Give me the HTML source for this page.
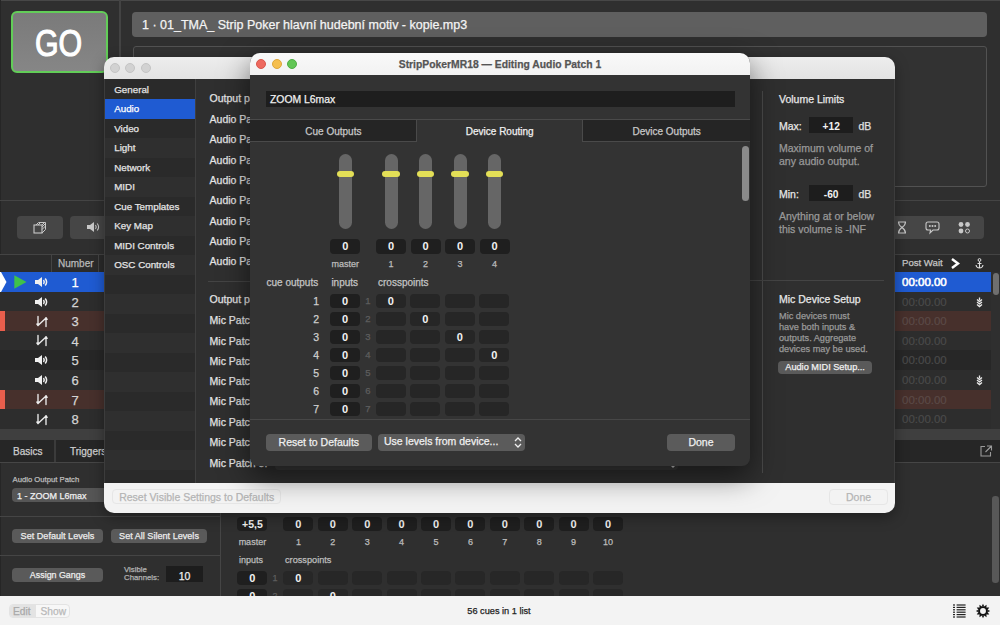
<!DOCTYPE html>
<html><head><meta charset="utf-8">
<style>
*{margin:0;padding:0;box-sizing:border-box}
html,body{width:1000px;height:625px;overflow:hidden;background:#2f2f2f;font-family:"Liberation Sans",sans-serif;color:#e6e6e6}
.a{position:absolute}
.t{position:absolute;white-space:nowrap;-webkit-text-stroke:0.25px currentColor}
.c{text-align:center}
</style></head>
<body>
<div class="a" style="left:0px;top:0px;width:1000px;height:596px;background:#2f2f2f;"></div>
<div class="a" style="left:0px;top:0px;width:1000px;height:1px;background:#474747;"></div>
<div class="a" style="left:0px;top:0px;width:1px;height:596px;background:#262626;"></div>
<div class="a" style="left:11px;top:11px;width:97px;height:62px;background:linear-gradient(#7a7a7a,#868686);border:2.5px solid #62cd58;border-radius:6px"></div>
<div class="t c" style="left:10.0px;top:21.6px;width:97px;font-size:37px;line-height:44px;color:#ffffff;transform:scaleX(0.82);-webkit-text-stroke:1.1px #fff">GO</div>
<div class="a" style="left:119px;top:0px;width:1.5px;height:200px;background:#434343;"></div>
<div class="a" style="left:132px;top:12px;width:855px;height:24.5px;background:#5f5f5f;border-radius:4px"></div>
<div class="t" style="left:142px;top:17px;font-size:12.5px;line-height:17px;color:#f4f4f4;">1 · 01_TMA_ Strip Poker hlavní hudební motiv - kopie.mp3</div>
<div class="a" style="left:133px;top:46px;width:854px;height:141px;background:#323232;border:1px solid #525252;border-radius:3px"></div>
<div class="a" style="left:0px;top:200px;width:1000px;height:1px;background:#444;"></div>
<div class="a" style="left:16.5px;top:216px;width:46px;height:23px;background:#464646;border-radius:4px"></div>
<div class="a" style="left:70px;top:216px;width:60px;height:23px;background:#464646;border-radius:4px"></div>
<div class="a" style="left:860px;top:216px;width:124px;height:23px;background:#464646;border-radius:4px"></div>
<svg class="a" style="left:33px;top:221px;" width="14" height="13" viewBox="0 0 14 13"><rect x="1" y="4" width="8" height="8" fill="none" stroke="#c8c8c8" stroke-width="1.1"/><path d="M3 4 L5.5 1.5 H12.5 V8.5 L9 12 M5 4 L7.5 1.5 M9 4 L11.5 1.5 M9 6 L12.5 2.5 M9 8.5 L12.5 5" fill="none" stroke="#c8c8c8" stroke-width="1"/></svg>
<svg class="a" style="left:86px;top:221px;" width="14" height="12" viewBox="0 0 14 12"><path d="M1 4 H4 L8 1 V11 L4 8 H1 Z" fill="#c8c8c8"/><path d="M9.5 4 Q11 6 9.5 8" fill="none" stroke="#c8c8c8" stroke-width="1.1"/><path d="M11.2 2.5 Q14 6 11.2 9.5" fill="none" stroke="#c8c8c8" stroke-width="1.1"/></svg>
<svg class="a" style="left:897px;top:221px;" width="10" height="13" viewBox="0 0 10 13"><path d="M1 1 H9 M1 12 H9 M1.5 1 Q1.5 4 5 6.5 Q8.5 9 8.5 12 M8.5 1 Q8.5 4 5 6.5 Q1.5 9 1.5 12" fill="none" stroke="#c8c8c8" stroke-width="1.1"/></svg>
<svg class="a" style="left:925px;top:221px;" width="15" height="14" viewBox="0 0 15 14"><path d="M3 1 H12 Q14 1 14 3 V7 Q14 9 12 9 H8 L5 12 L5.5 9 H3 Q1 9 1 7 V3 Q1 1 3 1 Z" fill="none" stroke="#c8c8c8" stroke-width="1.1"/><circle cx="4.8" cy="5" r="1" fill="#c8c8c8"/><circle cx="7.5" cy="5" r="1" fill="#c8c8c8"/><circle cx="10.2" cy="5" r="1" fill="#c8c8c8"/></svg>
<svg class="a" style="left:958px;top:221px;" width="13" height="13" viewBox="0 0 13 13"><circle cx="3" cy="3.5" r="2.4" fill="#c8c8c8"/><circle cx="9.5" cy="3.5" r="2.4" fill="#c8c8c8"/><circle cx="3" cy="10" r="2.4" fill="#c8c8c8"/><circle cx="9.5" cy="10" r="2" fill="none" stroke="#c8c8c8" stroke-width="1"/></svg>
<div class="a" style="left:0px;top:254px;width:1000px;height:1px;background:#444;"></div>
<div class="a" style="left:0px;top:255px;width:1000px;height:17px;background:#2b2b2b;"></div>
<div class="a" style="left:51px;top:255px;width:1px;height:17px;background:#444;"></div>
<div class="a" style="left:98px;top:255px;width:1px;height:17px;background:#444;"></div>
<div class="t" style="left:58px;top:257px;font-size:10px;line-height:13px;color:#b9b9b9;">Number</div>
<div class="t" style="left:902px;top:256.3px;font-size:9.6px;line-height:13px;color:#c6c6c6;">Post Wait</div>
<svg class="a" style="left:950px;top:258px;" width="10" height="11" viewBox="0 0 10 11"><path d="M2 1 L8 5.5 L2 10" fill="none" stroke="#ffffff" stroke-width="2.4" stroke-linejoin="miter"/></svg>
<svg class="a" style="left:975px;top:258px;" width="9" height="11" viewBox="0 0 9 11"><circle cx="4.5" cy="2" r="1.4" fill="none" stroke="#e0e0e0" stroke-width="1"/><path d="M4.5 3.4 V10 M1 7 Q1.5 10 4.5 10 Q7.5 10 8 7 M2.5 5.5 H6.5" fill="none" stroke="#e0e0e0" stroke-width="1.1"/></svg>
<div class="a" style="left:0px;top:272.0px;width:990.5px;height:19.6px;background:#1f5bd2;"></div>
<svg class="a" style="left:34px;top:276.0px;" width="14" height="12" viewBox="0 0 14 12"><path d="M1 4 H4 L8 1 V11 L4 8 H1 Z" fill="#f0f0f0"/><path d="M9.5 4 Q11 6 9.5 8" fill="none" stroke="#f0f0f0" stroke-width="1.5"/><path d="M11.2 2.5 Q14 6 11.2 9.5" fill="none" stroke="#f0f0f0" stroke-width="1.5"/></svg>
<div class="t c" style="left:65.0px;top:275.0px;width:20px;font-size:13px;line-height:16px;color:#ffffff;">1</div>
<div class="t" style="left:902px;top:275.0px;font-size:11.5px;line-height:15px;color:#ffffff;font-weight:normal;-webkit-text-stroke:0.6px #ffffff">00:00.00</div>
<div class="a" style="left:0px;top:291.6px;width:990.5px;height:19.6px;background:#2d2d2d;"></div>
<svg class="a" style="left:34px;top:295.6px;" width="14" height="12" viewBox="0 0 14 12"><path d="M1 4 H4 L8 1 V11 L4 8 H1 Z" fill="#f0f0f0"/><path d="M9.5 4 Q11 6 9.5 8" fill="none" stroke="#f0f0f0" stroke-width="1.5"/><path d="M11.2 2.5 Q14 6 11.2 9.5" fill="none" stroke="#f0f0f0" stroke-width="1.5"/></svg>
<div class="t c" style="left:65.0px;top:294.6px;width:20px;font-size:13px;line-height:16px;color:#d4d4d4;">2</div>
<div class="t" style="left:902px;top:294.6px;font-size:11.5px;line-height:15px;color:#4a4a4a;font-weight:normal;-webkit-text-stroke:0.2px #4a4a4a">00:00.00</div>
<svg class="a" style="left:975.7px;top:296.6px;" width="7" height="11" viewBox="0 0 7 11"><path d="M3.5 0.5 V3 M1 2.6 L3.5 4.6 L6 2.6 M1 5 L3.5 7 L6 5 M1 7.4 L3.5 9.6 L6 7.4" fill="none" stroke="#ececec" stroke-width="1.3"/></svg>
<div class="a" style="left:0px;top:311.2px;width:990.5px;height:19.6px;background:#47302c;"></div>
<div class="a" style="left:0px;top:311.2px;width:5px;height:19.6px;background:#ea5e4c;"></div>
<svg class="a" style="left:36px;top:314.7px;" width="12" height="13" viewBox="0 0 12 13"><path d="M2 1.5 V10.5 L10 3 V11.5 M0.9 9 L2 10.6 L3.1 9 M8.9 4.4 L10 2.6 L11.1 4.4" fill="none" stroke="#ececec" stroke-width="1.35" stroke-linecap="round" stroke-linejoin="round"/></svg>
<div class="t c" style="left:65.0px;top:314.2px;width:20px;font-size:13px;line-height:16px;color:#d4d4d4;">3</div>
<div class="t" style="left:902px;top:314.2px;font-size:11.5px;line-height:15px;color:#5b4a47;font-weight:normal;-webkit-text-stroke:0.2px #5b4a47">00:00.00</div>
<div class="a" style="left:0px;top:330.8px;width:990.5px;height:19.6px;background:#2d2d2d;"></div>
<svg class="a" style="left:36px;top:334.3px;" width="12" height="13" viewBox="0 0 12 13"><path d="M2 1.5 V10.5 L10 3 V11.5 M0.9 9 L2 10.6 L3.1 9 M8.9 4.4 L10 2.6 L11.1 4.4" fill="none" stroke="#ececec" stroke-width="1.35" stroke-linecap="round" stroke-linejoin="round"/></svg>
<div class="t c" style="left:65.0px;top:333.8px;width:20px;font-size:13px;line-height:16px;color:#d4d4d4;">4</div>
<div class="t" style="left:902px;top:333.8px;font-size:11.5px;line-height:15px;color:#4a4a4a;font-weight:normal;-webkit-text-stroke:0.2px #4a4a4a">00:00.00</div>
<div class="a" style="left:0px;top:350.4px;width:990.5px;height:19.6px;background:#272727;"></div>
<svg class="a" style="left:34px;top:354.4px;" width="14" height="12" viewBox="0 0 14 12"><path d="M1 4 H4 L8 1 V11 L4 8 H1 Z" fill="#f0f0f0"/><path d="M9.5 4 Q11 6 9.5 8" fill="none" stroke="#f0f0f0" stroke-width="1.5"/><path d="M11.2 2.5 Q14 6 11.2 9.5" fill="none" stroke="#f0f0f0" stroke-width="1.5"/></svg>
<div class="t c" style="left:65.0px;top:353.4px;width:20px;font-size:13px;line-height:16px;color:#d4d4d4;">5</div>
<div class="t" style="left:902px;top:353.4px;font-size:11.5px;line-height:15px;color:#4a4a4a;font-weight:normal;-webkit-text-stroke:0.2px #4a4a4a">00:00.00</div>
<div class="a" style="left:0px;top:370.0px;width:990.5px;height:19.6px;background:#2d2d2d;"></div>
<svg class="a" style="left:34px;top:374.0px;" width="14" height="12" viewBox="0 0 14 12"><path d="M1 4 H4 L8 1 V11 L4 8 H1 Z" fill="#f0f0f0"/><path d="M9.5 4 Q11 6 9.5 8" fill="none" stroke="#f0f0f0" stroke-width="1.5"/><path d="M11.2 2.5 Q14 6 11.2 9.5" fill="none" stroke="#f0f0f0" stroke-width="1.5"/></svg>
<div class="t c" style="left:65.0px;top:373.0px;width:20px;font-size:13px;line-height:16px;color:#d4d4d4;">6</div>
<div class="t" style="left:902px;top:373.0px;font-size:11.5px;line-height:15px;color:#4a4a4a;font-weight:normal;-webkit-text-stroke:0.2px #4a4a4a">00:00.00</div>
<svg class="a" style="left:975.7px;top:375.0px;" width="7" height="11" viewBox="0 0 7 11"><path d="M3.5 0.5 V3 M1 2.6 L3.5 4.6 L6 2.6 M1 5 L3.5 7 L6 5 M1 7.4 L3.5 9.6 L6 7.4" fill="none" stroke="#ececec" stroke-width="1.3"/></svg>
<div class="a" style="left:0px;top:389.6px;width:990.5px;height:19.6px;background:#47302c;"></div>
<div class="a" style="left:0px;top:389.6px;width:5px;height:19.6px;background:#ea5e4c;"></div>
<svg class="a" style="left:36px;top:393.1px;" width="12" height="13" viewBox="0 0 12 13"><path d="M2 1.5 V10.5 L10 3 V11.5 M0.9 9 L2 10.6 L3.1 9 M8.9 4.4 L10 2.6 L11.1 4.4" fill="none" stroke="#ececec" stroke-width="1.35" stroke-linecap="round" stroke-linejoin="round"/></svg>
<div class="t c" style="left:65.0px;top:392.6px;width:20px;font-size:13px;line-height:16px;color:#d4d4d4;">7</div>
<div class="t" style="left:902px;top:392.6px;font-size:11.5px;line-height:15px;color:#5b4a47;font-weight:normal;-webkit-text-stroke:0.2px #5b4a47">00:00.00</div>
<div class="a" style="left:0px;top:409.2px;width:990.5px;height:19.6px;background:#2d2d2d;"></div>
<svg class="a" style="left:36px;top:412.7px;" width="12" height="13" viewBox="0 0 12 13"><path d="M2 1.5 V10.5 L10 3 V11.5 M0.9 9 L2 10.6 L3.1 9 M8.9 4.4 L10 2.6 L11.1 4.4" fill="none" stroke="#ececec" stroke-width="1.35" stroke-linecap="round" stroke-linejoin="round"/></svg>
<div class="t c" style="left:65.0px;top:412.2px;width:20px;font-size:13px;line-height:16px;color:#d4d4d4;">8</div>
<div class="t" style="left:902px;top:412.2px;font-size:11.5px;line-height:15px;color:#4a4a4a;font-weight:normal;-webkit-text-stroke:0.2px #4a4a4a">00:00.00</div>
<svg class="a" style="left:0px;top:272px;" width="7" height="20" viewBox="0 0 7 20"><path d="M0 0 H1 L6.5 10 L1 20 H0 Z" fill="#ffffff"/></svg>
<svg class="a" style="left:14px;top:275.2px;" width="13" height="14" viewBox="0 0 13 14"><path d="M0.3 0.3 L12.5 7 L0.3 13.7 Z" fill="#3fc24a"/></svg>
<div class="a" style="left:992.5px;top:273px;width:6px;height:21.5px;background:#6f6f6f;border-radius:3px"></div>
<div class="a" style="left:0px;top:428.8px;width:1000px;height:11.2px;background:#3f3f3f;"></div>
<div class="a" style="left:0px;top:440px;width:1000px;height:22px;background:#262626;"></div>
<div class="a" style="left:54px;top:440px;width:1.5px;height:22px;background:#3b3b3b;"></div>
<div class="t" style="left:13px;top:444.5px;font-size:10px;line-height:13px;color:#cdcdcd;">Basics</div>
<div class="t" style="left:70px;top:444.5px;font-size:10px;line-height:13px;color:#cdcdcd;">Triggers</div>
<div class="a" style="left:0px;top:462px;width:1000px;height:1.2px;background:#464646;"></div>
<div class="a" style="left:992.2px;top:495.5px;width:6.5px;height:87px;background:#585858;border-radius:3.2px"></div>
<svg class="a" style="left:980px;top:445px;" width="13" height="12" viewBox="0 0 13 12"><path d="M5 1.5 H1 V11 H10.5 V7 M7 1 H11.5 V5.5 M11.5 1 L5.5 7" fill="none" stroke="#9a9a9a" stroke-width="1.1"/></svg>
<div class="t" style="left:12.5px;top:475px;font-size:7.7px;line-height:10px;color:#bdbdbd;">Audio Output Patch</div>
<div class="a" style="left:12px;top:488px;width:120px;height:14px;background:#565656;border-radius:4px"></div>
<div class="t" style="left:17px;top:489.5px;font-size:9px;line-height:12px;color:#f0f0f0;-webkit-text-stroke:0.25px #f0f0f0">1 - ZOOM L6max</div>
<div class="a" style="left:0px;top:516px;width:220px;height:1px;background:#454545;"></div>
<div class="t c" style="left:12px;top:529px;width:91px;height:14px;line-height:14px;background:#5a5a5a;border-radius:4px;font-size:9.1px;color:#ededed;">Set Default Levels</div>
<div class="t c" style="left:111px;top:529px;width:96px;height:14px;line-height:14px;background:#5a5a5a;border-radius:4px;font-size:9.1px;color:#ededed;">Set All Silent Levels</div>
<div class="a" style="left:0px;top:555px;width:220px;height:1px;background:#454545;"></div>
<div class="t c" style="left:12px;top:568px;width:91px;height:14px;line-height:14px;background:#5a5a5a;border-radius:4px;font-size:8.9px;color:#ededed;">Assign Gangs</div>
<div class="t" style="left:124px;top:565.7px;font-size:7.8px;line-height:8.5px;color:#b3b3b3;">Visible<br>Channels:</div>
<div class="t c" style="left:166px;top:566px;width:37px;height:16px;line-height:16px;background:#1d1d1d;border-radius:4px;font-size:10.5px;color:#f0f0f0;border-radius:0;padding-top:1.8px">10</div>
<div class="a" style="left:220px;top:512px;width:1px;height:84px;background:#454545;"></div>
<div class="t c" style="left:237.4px;top:516.5px;width:30px;height:14px;line-height:14px;background:#1f1f1f;border-radius:4px;font-size:10.5px;color:#f2f2f2;font-weight:bold;-webkit-text-stroke:0">+5,5</div>
<div class="t c" style="left:283.4px;top:516.5px;width:30px;height:14px;line-height:14px;background:#1f1f1f;border-radius:4px;font-size:11px;color:#f2f2f2;font-weight:bold;-webkit-text-stroke:0">0</div>
<div class="t c" style="left:286.4px;top:535.5px;width:24px;font-size:9px;line-height:12px;color:#bdbdbd;">1</div>
<div class="t c" style="left:317.8px;top:516.5px;width:30px;height:14px;line-height:14px;background:#1f1f1f;border-radius:4px;font-size:11px;color:#f2f2f2;font-weight:bold;-webkit-text-stroke:0">0</div>
<div class="t c" style="left:320.8px;top:535.5px;width:24px;font-size:9px;line-height:12px;color:#bdbdbd;">2</div>
<div class="t c" style="left:352.2px;top:516.5px;width:30px;height:14px;line-height:14px;background:#1f1f1f;border-radius:4px;font-size:11px;color:#f2f2f2;font-weight:bold;-webkit-text-stroke:0">0</div>
<div class="t c" style="left:355.2px;top:535.5px;width:24px;font-size:9px;line-height:12px;color:#bdbdbd;">3</div>
<div class="t c" style="left:386.6px;top:516.5px;width:30px;height:14px;line-height:14px;background:#1f1f1f;border-radius:4px;font-size:11px;color:#f2f2f2;font-weight:bold;-webkit-text-stroke:0">0</div>
<div class="t c" style="left:389.6px;top:535.5px;width:24px;font-size:9px;line-height:12px;color:#bdbdbd;">4</div>
<div class="t c" style="left:421.0px;top:516.5px;width:30px;height:14px;line-height:14px;background:#1f1f1f;border-radius:4px;font-size:11px;color:#f2f2f2;font-weight:bold;-webkit-text-stroke:0">0</div>
<div class="t c" style="left:424.0px;top:535.5px;width:24px;font-size:9px;line-height:12px;color:#bdbdbd;">5</div>
<div class="t c" style="left:455.4px;top:516.5px;width:30px;height:14px;line-height:14px;background:#1f1f1f;border-radius:4px;font-size:11px;color:#f2f2f2;font-weight:bold;-webkit-text-stroke:0">0</div>
<div class="t c" style="left:458.4px;top:535.5px;width:24px;font-size:9px;line-height:12px;color:#bdbdbd;">6</div>
<div class="t c" style="left:489.8px;top:516.5px;width:30px;height:14px;line-height:14px;background:#1f1f1f;border-radius:4px;font-size:11px;color:#f2f2f2;font-weight:bold;-webkit-text-stroke:0">0</div>
<div class="t c" style="left:492.8px;top:535.5px;width:24px;font-size:9px;line-height:12px;color:#bdbdbd;">7</div>
<div class="t c" style="left:524.2px;top:516.5px;width:30px;height:14px;line-height:14px;background:#1f1f1f;border-radius:4px;font-size:11px;color:#f2f2f2;font-weight:bold;-webkit-text-stroke:0">0</div>
<div class="t c" style="left:527.2px;top:535.5px;width:24px;font-size:9px;line-height:12px;color:#bdbdbd;">8</div>
<div class="t c" style="left:558.6px;top:516.5px;width:30px;height:14px;line-height:14px;background:#1f1f1f;border-radius:4px;font-size:11px;color:#f2f2f2;font-weight:bold;-webkit-text-stroke:0">0</div>
<div class="t c" style="left:561.6px;top:535.5px;width:24px;font-size:9px;line-height:12px;color:#bdbdbd;">9</div>
<div class="t c" style="left:593.0px;top:516.5px;width:30px;height:14px;line-height:14px;background:#1f1f1f;border-radius:4px;font-size:11px;color:#f2f2f2;font-weight:bold;-webkit-text-stroke:0">0</div>
<div class="t c" style="left:596.0px;top:535.5px;width:24px;font-size:9px;line-height:12px;color:#bdbdbd;">10</div>
<div class="t c" style="left:232.4px;top:535.5px;width:40px;font-size:9px;line-height:12px;color:#bdbdbd;">master</div>
<div class="t" style="left:239px;top:554px;font-size:9px;line-height:12px;color:#bdbdbd;">inputs</div>
<div class="t" style="left:285px;top:554px;font-size:9.2px;line-height:12px;color:#bdbdbd;">crosspoints</div>
<div class="t c" style="left:237.4px;top:571px;width:30px;height:14px;line-height:14px;background:#1f1f1f;border-radius:4px;font-size:11px;color:#f2f2f2;font-weight:bold;-webkit-text-stroke:0">0</div>
<div class="t c" style="left:270.0px;top:572px;width:10px;font-size:9px;line-height:12px;color:#5e5e5e;">1</div>
<div class="t c" style="left:283.4px;top:571px;width:30px;height:14px;line-height:14px;background:#272727;border-radius:4px;font-size:11px;color:#f2f2f2;font-weight:bold;-webkit-text-stroke:0">0</div>
<div class="t c" style="left:317.8px;top:571px;width:30px;height:14px;line-height:14px;background:#272727;border-radius:4px;font-size:11px;color:#f2f2f2;font-weight:bold;-webkit-text-stroke:0"></div>
<div class="t c" style="left:352.2px;top:571px;width:30px;height:14px;line-height:14px;background:#272727;border-radius:4px;font-size:11px;color:#f2f2f2;font-weight:bold;-webkit-text-stroke:0"></div>
<div class="t c" style="left:386.6px;top:571px;width:30px;height:14px;line-height:14px;background:#272727;border-radius:4px;font-size:11px;color:#f2f2f2;font-weight:bold;-webkit-text-stroke:0"></div>
<div class="t c" style="left:421.0px;top:571px;width:30px;height:14px;line-height:14px;background:#272727;border-radius:4px;font-size:11px;color:#f2f2f2;font-weight:bold;-webkit-text-stroke:0"></div>
<div class="t c" style="left:455.4px;top:571px;width:30px;height:14px;line-height:14px;background:#272727;border-radius:4px;font-size:11px;color:#f2f2f2;font-weight:bold;-webkit-text-stroke:0"></div>
<div class="t c" style="left:489.8px;top:571px;width:30px;height:14px;line-height:14px;background:#272727;border-radius:4px;font-size:11px;color:#f2f2f2;font-weight:bold;-webkit-text-stroke:0"></div>
<div class="t c" style="left:524.2px;top:571px;width:30px;height:14px;line-height:14px;background:#272727;border-radius:4px;font-size:11px;color:#f2f2f2;font-weight:bold;-webkit-text-stroke:0"></div>
<div class="t c" style="left:558.6px;top:571px;width:30px;height:14px;line-height:14px;background:#272727;border-radius:4px;font-size:11px;color:#f2f2f2;font-weight:bold;-webkit-text-stroke:0"></div>
<div class="t c" style="left:593.0px;top:571px;width:30px;height:14px;line-height:14px;background:#272727;border-radius:4px;font-size:11px;color:#f2f2f2;font-weight:bold;-webkit-text-stroke:0"></div>
<div class="t c" style="left:237.4px;top:589px;width:30px;height:14px;line-height:14px;background:#1f1f1f;border-radius:4px;font-size:11px;color:#f2f2f2;font-weight:bold;-webkit-text-stroke:0">0</div>
<div class="t c" style="left:270.0px;top:590px;width:10px;font-size:9px;line-height:12px;color:#5e5e5e;">2</div>
<div class="t c" style="left:283.4px;top:589px;width:30px;height:14px;line-height:14px;background:#272727;border-radius:4px;font-size:11px;color:#f2f2f2;font-weight:bold;-webkit-text-stroke:0"></div>
<div class="t c" style="left:317.8px;top:589px;width:30px;height:14px;line-height:14px;background:#272727;border-radius:4px;font-size:11px;color:#f2f2f2;font-weight:bold;-webkit-text-stroke:0">0</div>
<div class="t c" style="left:352.2px;top:589px;width:30px;height:14px;line-height:14px;background:#272727;border-radius:4px;font-size:11px;color:#f2f2f2;font-weight:bold;-webkit-text-stroke:0"></div>
<div class="t c" style="left:386.6px;top:589px;width:30px;height:14px;line-height:14px;background:#272727;border-radius:4px;font-size:11px;color:#f2f2f2;font-weight:bold;-webkit-text-stroke:0"></div>
<div class="t c" style="left:421.0px;top:589px;width:30px;height:14px;line-height:14px;background:#272727;border-radius:4px;font-size:11px;color:#f2f2f2;font-weight:bold;-webkit-text-stroke:0"></div>
<div class="t c" style="left:455.4px;top:589px;width:30px;height:14px;line-height:14px;background:#272727;border-radius:4px;font-size:11px;color:#f2f2f2;font-weight:bold;-webkit-text-stroke:0"></div>
<div class="t c" style="left:489.8px;top:589px;width:30px;height:14px;line-height:14px;background:#272727;border-radius:4px;font-size:11px;color:#f2f2f2;font-weight:bold;-webkit-text-stroke:0"></div>
<div class="t c" style="left:524.2px;top:589px;width:30px;height:14px;line-height:14px;background:#272727;border-radius:4px;font-size:11px;color:#f2f2f2;font-weight:bold;-webkit-text-stroke:0"></div>
<div class="t c" style="left:558.6px;top:589px;width:30px;height:14px;line-height:14px;background:#272727;border-radius:4px;font-size:11px;color:#f2f2f2;font-weight:bold;-webkit-text-stroke:0"></div>
<div class="t c" style="left:593.0px;top:589px;width:30px;height:14px;line-height:14px;background:#272727;border-radius:4px;font-size:11px;color:#f2f2f2;font-weight:bold;-webkit-text-stroke:0"></div>
<div class="a" style="left:0px;top:596px;width:1000px;height:29px;background:#f3f3f3;"></div>
<div class="a" style="left:9px;top:603.5px;width:61px;height:14.5px;background:#f7f7f7;border:1px solid #e3e3e3;border-radius:4px"></div>
<div class="a" style="left:10px;top:604.5px;width:26px;height:12.5px;background:#e3e3e3;border-radius:3px 0 0 3px"></div>
<div class="t" style="left:13px;top:604.5px;font-size:10.2px;line-height:13px;color:#a9a9a9;">Edit</div>
<div class="t" style="left:40.5px;top:604.5px;font-size:10.2px;line-height:13px;color:#b9b9b9;">Show</div>
<div class="t c" style="left:454.0px;top:604.8px;width:90px;font-size:9.2px;line-height:13px;color:#222222;">56 cues in 1 list</div>
<svg class="a" style="left:952px;top:604px;" width="15" height="14" viewBox="0 0 15 14"><rect x="1" y="0.4" width="2" height="1.2" fill="#222"/><rect x="4.6" y="0.4" width="9" height="1.2" fill="#222"/><rect x="1" y="2.8" width="2" height="1.2" fill="#222"/><rect x="4.6" y="2.8" width="9" height="1.2" fill="#222"/><rect x="1" y="5.2" width="2" height="1.2" fill="#222"/><rect x="4.6" y="5.2" width="9" height="1.2" fill="#222"/><rect x="1" y="7.6" width="2" height="1.2" fill="#222"/><rect x="4.6" y="7.6" width="9" height="1.2" fill="#222"/><rect x="1" y="10.0" width="2" height="1.2" fill="#222"/><rect x="4.6" y="10.0" width="9" height="1.2" fill="#222"/><rect x="1" y="12.4" width="2" height="1.2" fill="#222"/><rect x="4.6" y="12.4" width="9" height="1.2" fill="#222"/></svg>
<svg class="a" style="left:974.6px;top:603px;" width="16" height="16" viewBox="0 0 16 16"><g transform="translate(8 8)"><path d="M-1.3 -4.5 L0 -7.2 L1.3 -4.5 Z" fill="#111" transform="rotate(0)"/><path d="M-1.3 -4.5 L0 -7.2 L1.3 -4.5 Z" fill="#111" transform="rotate(30)"/><path d="M-1.3 -4.5 L0 -7.2 L1.3 -4.5 Z" fill="#111" transform="rotate(60)"/><path d="M-1.3 -4.5 L0 -7.2 L1.3 -4.5 Z" fill="#111" transform="rotate(90)"/><path d="M-1.3 -4.5 L0 -7.2 L1.3 -4.5 Z" fill="#111" transform="rotate(120)"/><path d="M-1.3 -4.5 L0 -7.2 L1.3 -4.5 Z" fill="#111" transform="rotate(150)"/><path d="M-1.3 -4.5 L0 -7.2 L1.3 -4.5 Z" fill="#111" transform="rotate(180)"/><path d="M-1.3 -4.5 L0 -7.2 L1.3 -4.5 Z" fill="#111" transform="rotate(210)"/><path d="M-1.3 -4.5 L0 -7.2 L1.3 -4.5 Z" fill="#111" transform="rotate(240)"/><path d="M-1.3 -4.5 L0 -7.2 L1.3 -4.5 Z" fill="#111" transform="rotate(270)"/><path d="M-1.3 -4.5 L0 -7.2 L1.3 -4.5 Z" fill="#111" transform="rotate(300)"/><path d="M-1.3 -4.5 L0 -7.2 L1.3 -4.5 Z" fill="#111" transform="rotate(330)"/><circle r="3.9" fill="none" stroke="#111" stroke-width="1.9"/></g></svg>
<div class="a" style="left:104px;top:57px;width:791px;height:455.7px;background:transparent;border-radius:10px;box-shadow:0 4px 14px rgba(0,0,0,0.35)"></div>
<div class="a" style="left:104px;top:57px;width:791px;height:22px;background:linear-gradient(#ededed,#e3e3e3);border-radius:10px 10px 0 0"></div>
<div class="a" style="left:109.7px;top:63px;width:10px;height:10px;background:#d2d2d2;border-radius:50%;border:0.5px solid #c4c4c4"></div>
<div class="a" style="left:125.4px;top:63px;width:10px;height:10px;background:#d2d2d2;border-radius:50%;border:0.5px solid #c4c4c4"></div>
<div class="a" style="left:141px;top:63px;width:10px;height:10px;background:#d2d2d2;border-radius:50%;border:0.5px solid #c4c4c4"></div>
<div class="a" style="left:104px;top:79px;width:791px;height:404.6px;background:#2f2f2f;"></div>
<div class="a" style="left:104px;top:79px;width:90.5px;height:20.2px;background:#2a2a2a;"></div>
<div class="t" style="left:114.2px;top:82.7px;font-size:9.8px;line-height:13px;color:#e4e4e4;">General</div>
<div class="a" style="left:104px;top:99.2px;width:90.5px;height:19.5px;background:#1f5bd2;"></div>
<div class="t" style="left:114.2px;top:102.2px;font-size:9.8px;line-height:13px;color:#ffffff;">Audio</div>
<div class="a" style="left:104px;top:118.7px;width:90.5px;height:19.5px;background:#2a2a2a;"></div>
<div class="t" style="left:114.2px;top:121.7px;font-size:9.8px;line-height:13px;color:#e4e4e4;">Video</div>
<div class="a" style="left:104px;top:138.2px;width:90.5px;height:19.5px;background:#2f2f2f;"></div>
<div class="t" style="left:114.2px;top:141.2px;font-size:9.8px;line-height:13px;color:#e4e4e4;">Light</div>
<div class="a" style="left:104px;top:157.7px;width:90.5px;height:19.5px;background:#2a2a2a;"></div>
<div class="t" style="left:114.2px;top:160.7px;font-size:9.8px;line-height:13px;color:#e4e4e4;">Network</div>
<div class="a" style="left:104px;top:177.2px;width:90.5px;height:19.5px;background:#2f2f2f;"></div>
<div class="t" style="left:114.2px;top:180.2px;font-size:9.8px;line-height:13px;color:#e4e4e4;">MIDI</div>
<div class="a" style="left:104px;top:196.7px;width:90.5px;height:19.5px;background:#2a2a2a;"></div>
<div class="t" style="left:114.2px;top:199.7px;font-size:9.8px;line-height:13px;color:#e4e4e4;">Cue Templates</div>
<div class="a" style="left:104px;top:216.2px;width:90.5px;height:19.5px;background:#2f2f2f;"></div>
<div class="t" style="left:114.2px;top:219.2px;font-size:9.8px;line-height:13px;color:#e4e4e4;">Key Map</div>
<div class="a" style="left:104px;top:235.7px;width:90.5px;height:19.5px;background:#2a2a2a;"></div>
<div class="t" style="left:114.2px;top:238.7px;font-size:9.8px;line-height:13px;color:#e4e4e4;">MIDI Controls</div>
<div class="a" style="left:104px;top:255.2px;width:90.5px;height:19.5px;background:#2f2f2f;"></div>
<div class="t" style="left:114.2px;top:258.2px;font-size:9.8px;line-height:13px;color:#e4e4e4;">OSC Controls</div>
<div class="a" style="left:104px;top:274.7px;width:90.5px;height:19.5px;background:#2a2a2a;"></div>
<div class="a" style="left:104px;top:294.2px;width:90.5px;height:19.5px;background:#2f2f2f;"></div>
<div class="a" style="left:104px;top:313.7px;width:90.5px;height:19.5px;background:#2a2a2a;"></div>
<div class="a" style="left:104px;top:333.2px;width:90.5px;height:19.5px;background:#2f2f2f;"></div>
<div class="a" style="left:104px;top:352.7px;width:90.5px;height:19.5px;background:#2a2a2a;"></div>
<div class="a" style="left:104px;top:372.2px;width:90.5px;height:19.5px;background:#2f2f2f;"></div>
<div class="a" style="left:104px;top:391.7px;width:90.5px;height:19.5px;background:#2a2a2a;"></div>
<div class="a" style="left:104px;top:411.2px;width:90.5px;height:19.5px;background:#2f2f2f;"></div>
<div class="a" style="left:104px;top:430.7px;width:90.5px;height:19.5px;background:#2a2a2a;"></div>
<div class="a" style="left:104px;top:450.2px;width:90.5px;height:19.5px;background:#2f2f2f;"></div>
<div class="a" style="left:104px;top:469.7px;width:90.5px;height:13.9px;background:#2a2a2a;"></div>
<div class="a" style="left:194.5px;top:79px;width:1px;height:404.6px;background:#3f3f3f;"></div>
<div class="a" style="left:104px;top:79px;width:1px;height:404.6px;background:#3c3c3c;"></div>
<div class="a" style="left:894px;top:79px;width:1px;height:404.6px;background:#3c3c3c;"></div>
<div class="t" style="left:209.6px;top:91.5px;font-size:10.5px;line-height:13px;color:#e4e4e4;">Output patches</div>
<div class="t" style="left:209.6px;top:112.5px;font-size:10.5px;line-height:13px;color:#e4e4e4;">Audio Patch 1:</div>
<div class="t" style="left:209.6px;top:132.5px;font-size:10.5px;line-height:13px;color:#e4e4e4;">Audio Patch 2:</div>
<div class="t" style="left:209.6px;top:153.5px;font-size:10.5px;line-height:13px;color:#e4e4e4;">Audio Patch 3:</div>
<div class="t" style="left:209.6px;top:173.5px;font-size:10.5px;line-height:13px;color:#e4e4e4;">Audio Patch 4:</div>
<div class="t" style="left:209.6px;top:193.5px;font-size:10.5px;line-height:13px;color:#e4e4e4;">Audio Patch 5:</div>
<div class="t" style="left:209.6px;top:214.5px;font-size:10.5px;line-height:13px;color:#e4e4e4;">Audio Patch 6:</div>
<div class="t" style="left:209.6px;top:234.5px;font-size:10.5px;line-height:13px;color:#e4e4e4;">Audio Patch 7:</div>
<div class="t" style="left:209.6px;top:255.0px;font-size:10.5px;line-height:13px;color:#e4e4e4;">Audio Patch 8:</div>
<div class="a" style="left:208px;top:280.5px;width:540px;height:1px;background:#444;"></div>
<div class="t" style="left:209.6px;top:292.5px;font-size:10.5px;line-height:13px;color:#e4e4e4;">Output patches for mic cues</div>
<div class="t" style="left:209.6px;top:314.3px;font-size:10.5px;line-height:13px;color:#e4e4e4;">Mic Patch 1:</div>
<div class="t" style="left:209.6px;top:334.5px;font-size:10.5px;line-height:13px;color:#e4e4e4;">Mic Patch 2:</div>
<div class="t" style="left:209.6px;top:354.5px;font-size:10.5px;line-height:13px;color:#e4e4e4;">Mic Patch 3:</div>
<div class="t" style="left:209.6px;top:375.0px;font-size:10.5px;line-height:13px;color:#e4e4e4;">Mic Patch 4:</div>
<div class="t" style="left:209.6px;top:395.3px;font-size:10.5px;line-height:13px;color:#e4e4e4;">Mic Patch 5:</div>
<div class="t" style="left:209.6px;top:415.5px;font-size:10.5px;line-height:13px;color:#e4e4e4;">Mic Patch 6:</div>
<div class="t" style="left:209.6px;top:436.1px;font-size:10.5px;line-height:13px;color:#e4e4e4;">Mic Patch 7:</div>
<div class="t" style="left:209.6px;top:456.5px;font-size:10.5px;line-height:13px;color:#e4e4e4;">Mic Patch 8:</div>
<div class="a" style="left:762px;top:90.5px;width:1.3px;height:382px;background:#4a4a4a;"></div>
<div class="t" style="left:779px;top:93px;font-size:10.5px;line-height:13px;color:#e8e8e8;">Volume Limits</div>
<div class="t" style="left:779px;top:119.5px;font-size:10.5px;line-height:13px;color:#e8e8e8;">Max:</div>
<div class="t c" style="left:809.4px;top:117px;width:43.6px;height:16px;line-height:16px;background:#1d1d1d;border-radius:4px;font-size:10.2px;color:#f2f2f2;border-radius:0;padding-top:1.7px;font-weight:bold;-webkit-text-stroke:0">+12</div>
<div class="t" style="left:858.4px;top:119.5px;font-size:10.5px;line-height:13px;color:#e0e0e0;">dB</div>
<div class="t" style="left:779px;top:142px;font-size:10.5px;line-height:13.3px;color:#9a9a9a;">Maximum volume of<br>any audio output.</div>
<div class="t" style="left:779px;top:187.5px;font-size:10.5px;line-height:13px;color:#e8e8e8;">Min:</div>
<div class="t c" style="left:809.4px;top:185px;width:43.6px;height:16px;line-height:16px;background:#1d1d1d;border-radius:4px;font-size:10.2px;color:#f2f2f2;border-radius:0;padding-top:1.7px;font-weight:bold;-webkit-text-stroke:0">-60</div>
<div class="t" style="left:858.4px;top:187.5px;font-size:10.5px;line-height:13px;color:#e0e0e0;">dB</div>
<div class="t" style="left:779px;top:209.5px;font-size:10.5px;line-height:13.3px;color:#9a9a9a;">Anything at or below<br>this volume is -INF</div>
<div class="a" style="left:749px;top:280px;width:134.5px;height:1px;background:#444;"></div>
<div class="t" style="left:779px;top:293px;font-size:10.5px;line-height:13px;color:#e8e8e8;">Mic Device Setup</div>
<div class="t" style="left:779px;top:311.3px;font-size:9.2px;line-height:11px;color:#9a9a9a;">Mic devices must<br>have both inputs &amp;<br>outputs. Aggregate<br>devices may be used.</div>
<div class="t c" style="left:778.3px;top:361px;width:93.6px;height:13.4px;line-height:13.4px;background:#5a5a5a;border-radius:4px;font-size:9.2px;color:#f0f0f0;">Audio MIDI Setup...</div>
<div class="a" style="left:104px;top:483.3px;width:791px;height:29.4px;background:#f3f3f3;border-radius:0 0 10px 10px"></div>
<div class="t c" style="left:112.4px;top:489.3px;width:168.6px;height:14.4px;line-height:14.4px;background:#f3f3f3;border-radius:4px;font-size:10.5px;color:#b5b5b5;border:1px solid #e6e6e6">Reset Visible Settings to Defaults</div>
<div class="t c" style="left:829.4px;top:489.3px;width:58.3px;height:15.8px;line-height:15.8px;background:#f3f3f3;border-radius:4px;font-size:10.5px;color:#b5b5b5;border:1px solid #e6e6e6">Done</div>
<div class="a" style="left:274.5px;top:452px;width:403px;height:17.5px;background:#3a3a3a;border-radius:4px"></div>
<svg class="a" style="left:669px;top:463.5px;" width="8" height="5" viewBox="0 0 8 5"><path d="M1 1 L4 4 L7 1 Z" fill="#d0d0d0"/></svg>
<div class="a" style="left:250.3px;top:53px;width:500px;height:413px;background:#333333;border-radius:10px 10px 8px 8px;box-shadow:0 10px 30px rgba(0,0,0,0.55)"></div>
<div class="a" style="left:250.3px;top:53px;width:500px;height:21.6px;background:linear-gradient(#f9f9f9,#f2f2f2);border-radius:10px 10px 0 0"></div>
<div class="a" style="left:256px;top:59px;width:10px;height:10px;background:#ee6a5f;border-radius:50%;border:0.5px solid #d9574c"></div>
<div class="a" style="left:271.5px;top:59px;width:10px;height:10px;background:#f5bf4f;border-radius:50%;border:0.5px solid #dda73a"></div>
<div class="a" style="left:287.2px;top:59px;width:10px;height:10px;background:#62c655;border-radius:50%;border:0.5px solid #4fae44"></div>
<div class="t c" style="left:350.0px;top:57.5px;width:300px;font-size:10.35px;line-height:13px;color:#555555;font-weight:bold">StripPokerMR18 — Editing Audio Patch 1</div>
<div class="a" style="left:265.5px;top:91px;width:469.5px;height:16px;background:#1e1e1e;"></div>
<div class="t" style="left:270px;top:92.5px;font-size:10.4px;line-height:13px;color:#f0f0f0;">ZOOM L6max</div>
<div class="a" style="left:250.3px;top:119.4px;width:500px;height:1px;background:#4a4a4a;"></div>
<div class="a" style="left:250.3px;top:120.4px;width:166.09999999999997px;height:21.6px;background:#252525;border-bottom:1px solid #4a4a4a"></div>
<div class="t c" style="left:253.35000000000002px;top:124.5px;width:160px;font-size:10px;line-height:13px;color:#c8c8c8;">Cue Outputs</div>
<div class="a" style="left:416.4px;top:119.4px;width:1px;height:22.6px;background:#4a4a4a;"></div>
<div class="a" style="left:582px;top:119.4px;width:1px;height:22.6px;background:#4a4a4a;"></div>
<div class="t c" style="left:419.7px;top:124.5px;width:160px;font-size:10px;line-height:13px;color:#f0f0f0;">Device Routing</div>
<div class="a" style="left:583px;top:120.4px;width:167.29999999999995px;height:21.6px;background:#252525;border-bottom:1px solid #4a4a4a"></div>
<div class="t c" style="left:586.65px;top:124.5px;width:160px;font-size:10px;line-height:13px;color:#c8c8c8;">Device Outputs</div>
<div class="a" style="left:742px;top:145.6px;width:7px;height:55.4px;background:#8a8a8a;border-radius:3.5px"></div>
<div class="a" style="left:338.7px;top:154.4px;width:13px;height:75px;background:#666666;border-radius:6.5px"></div>
<div class="a" style="left:336.5px;top:171px;width:17.4px;height:6.3px;background:#e3df57;border-radius:3.2px"></div>
<div class="t c" style="left:330.2px;top:239px;width:30px;height:14.5px;line-height:14.5px;background:#1f1f1f;border-radius:4px;font-size:11px;color:#f2f2f2;font-weight:bold;-webkit-text-stroke:0">0</div>
<div class="t c" style="left:320.2px;top:258px;width:50px;font-size:9px;line-height:12px;color:#bdbdbd;">master</div>
<div class="a" style="left:384.5px;top:154.4px;width:13px;height:75px;background:#666666;border-radius:6.5px"></div>
<div class="a" style="left:382.3px;top:171px;width:17.4px;height:6.3px;background:#e3df57;border-radius:3.2px"></div>
<div class="t c" style="left:376px;top:239px;width:30px;height:14.5px;line-height:14.5px;background:#1f1f1f;border-radius:4px;font-size:11px;color:#f2f2f2;font-weight:bold;-webkit-text-stroke:0">0</div>
<div class="t c" style="left:366.0px;top:258px;width:50px;font-size:9px;line-height:12px;color:#bdbdbd;">1</div>
<div class="a" style="left:419.0px;top:154.4px;width:13px;height:75px;background:#666666;border-radius:6.5px"></div>
<div class="a" style="left:416.8px;top:171px;width:17.4px;height:6.3px;background:#e3df57;border-radius:3.2px"></div>
<div class="t c" style="left:410.5px;top:239px;width:30px;height:14.5px;line-height:14.5px;background:#1f1f1f;border-radius:4px;font-size:11px;color:#f2f2f2;font-weight:bold;-webkit-text-stroke:0">0</div>
<div class="t c" style="left:400.5px;top:258px;width:50px;font-size:9px;line-height:12px;color:#bdbdbd;">2</div>
<div class="a" style="left:453.5px;top:154.4px;width:13px;height:75px;background:#666666;border-radius:6.5px"></div>
<div class="a" style="left:451.3px;top:171px;width:17.4px;height:6.3px;background:#e3df57;border-radius:3.2px"></div>
<div class="t c" style="left:445px;top:239px;width:30px;height:14.5px;line-height:14.5px;background:#1f1f1f;border-radius:4px;font-size:11px;color:#f2f2f2;font-weight:bold;-webkit-text-stroke:0">0</div>
<div class="t c" style="left:435.0px;top:258px;width:50px;font-size:9px;line-height:12px;color:#bdbdbd;">3</div>
<div class="a" style="left:488.0px;top:154.4px;width:13px;height:75px;background:#666666;border-radius:6.5px"></div>
<div class="a" style="left:485.8px;top:171px;width:17.4px;height:6.3px;background:#e3df57;border-radius:3.2px"></div>
<div class="t c" style="left:479.5px;top:239px;width:30px;height:14.5px;line-height:14.5px;background:#1f1f1f;border-radius:4px;font-size:11px;color:#f2f2f2;font-weight:bold;-webkit-text-stroke:0">0</div>
<div class="t c" style="left:469.5px;top:258px;width:50px;font-size:9px;line-height:12px;color:#bdbdbd;">4</div>
<div class="t" style="left:266.5px;top:277.3px;font-size:10px;line-height:12px;color:#c4c4c4;">cue outputs</div>
<div class="t" style="left:331.4px;top:277.3px;font-size:10px;line-height:12px;color:#c4c4c4;">inputs</div>
<div class="t" style="left:378px;top:277.3px;font-size:10px;line-height:12px;color:#c4c4c4;">crosspoints</div>
<div class="t" style="left:300px;top:294px;width:19px;text-align:right;font-size:10.5px;line-height:14px;color:#cfcfcf">1</div>
<div class="t c" style="left:330px;top:294px;width:30px;height:14px;line-height:14px;background:#1f1f1f;border-radius:4px;font-size:11px;color:#f2f2f2;font-weight:bold;-webkit-text-stroke:0">0</div>
<div class="t c" style="left:362.8px;top:294px;width:10px;font-size:9.5px;line-height:14px;color:#5e5e5e;">1</div>
<div class="t c" style="left:375.8px;top:294px;width:30px;height:14px;line-height:14px;background:#262626;border-radius:4px;font-size:11px;color:#f2f2f2;font-weight:bold;-webkit-text-stroke:0">0</div>
<div class="t c" style="left:410.3px;top:294px;width:30px;height:14px;line-height:14px;background:#262626;border-radius:4px;font-size:11px;color:#f2f2f2;font-weight:bold;-webkit-text-stroke:0"></div>
<div class="t c" style="left:444.8px;top:294px;width:30px;height:14px;line-height:14px;background:#262626;border-radius:4px;font-size:11px;color:#f2f2f2;font-weight:bold;-webkit-text-stroke:0"></div>
<div class="t c" style="left:479.3px;top:294px;width:30px;height:14px;line-height:14px;background:#262626;border-radius:4px;font-size:11px;color:#f2f2f2;font-weight:bold;-webkit-text-stroke:0"></div>
<div class="t" style="left:300px;top:312px;width:19px;text-align:right;font-size:10.5px;line-height:14px;color:#cfcfcf">2</div>
<div class="t c" style="left:330px;top:312px;width:30px;height:14px;line-height:14px;background:#1f1f1f;border-radius:4px;font-size:11px;color:#f2f2f2;font-weight:bold;-webkit-text-stroke:0">0</div>
<div class="t c" style="left:362.8px;top:312px;width:10px;font-size:9.5px;line-height:14px;color:#5e5e5e;">2</div>
<div class="t c" style="left:375.8px;top:312px;width:30px;height:14px;line-height:14px;background:#262626;border-radius:4px;font-size:11px;color:#f2f2f2;font-weight:bold;-webkit-text-stroke:0"></div>
<div class="t c" style="left:410.3px;top:312px;width:30px;height:14px;line-height:14px;background:#262626;border-radius:4px;font-size:11px;color:#f2f2f2;font-weight:bold;-webkit-text-stroke:0">0</div>
<div class="t c" style="left:444.8px;top:312px;width:30px;height:14px;line-height:14px;background:#262626;border-radius:4px;font-size:11px;color:#f2f2f2;font-weight:bold;-webkit-text-stroke:0"></div>
<div class="t c" style="left:479.3px;top:312px;width:30px;height:14px;line-height:14px;background:#262626;border-radius:4px;font-size:11px;color:#f2f2f2;font-weight:bold;-webkit-text-stroke:0"></div>
<div class="t" style="left:300px;top:330px;width:19px;text-align:right;font-size:10.5px;line-height:14px;color:#cfcfcf">3</div>
<div class="t c" style="left:330px;top:330px;width:30px;height:14px;line-height:14px;background:#1f1f1f;border-radius:4px;font-size:11px;color:#f2f2f2;font-weight:bold;-webkit-text-stroke:0">0</div>
<div class="t c" style="left:362.8px;top:330px;width:10px;font-size:9.5px;line-height:14px;color:#5e5e5e;">3</div>
<div class="t c" style="left:375.8px;top:330px;width:30px;height:14px;line-height:14px;background:#262626;border-radius:4px;font-size:11px;color:#f2f2f2;font-weight:bold;-webkit-text-stroke:0"></div>
<div class="t c" style="left:410.3px;top:330px;width:30px;height:14px;line-height:14px;background:#262626;border-radius:4px;font-size:11px;color:#f2f2f2;font-weight:bold;-webkit-text-stroke:0"></div>
<div class="t c" style="left:444.8px;top:330px;width:30px;height:14px;line-height:14px;background:#262626;border-radius:4px;font-size:11px;color:#f2f2f2;font-weight:bold;-webkit-text-stroke:0">0</div>
<div class="t c" style="left:479.3px;top:330px;width:30px;height:14px;line-height:14px;background:#262626;border-radius:4px;font-size:11px;color:#f2f2f2;font-weight:bold;-webkit-text-stroke:0"></div>
<div class="t" style="left:300px;top:348px;width:19px;text-align:right;font-size:10.5px;line-height:14px;color:#cfcfcf">4</div>
<div class="t c" style="left:330px;top:348px;width:30px;height:14px;line-height:14px;background:#1f1f1f;border-radius:4px;font-size:11px;color:#f2f2f2;font-weight:bold;-webkit-text-stroke:0">0</div>
<div class="t c" style="left:362.8px;top:348px;width:10px;font-size:9.5px;line-height:14px;color:#5e5e5e;">4</div>
<div class="t c" style="left:375.8px;top:348px;width:30px;height:14px;line-height:14px;background:#262626;border-radius:4px;font-size:11px;color:#f2f2f2;font-weight:bold;-webkit-text-stroke:0"></div>
<div class="t c" style="left:410.3px;top:348px;width:30px;height:14px;line-height:14px;background:#262626;border-radius:4px;font-size:11px;color:#f2f2f2;font-weight:bold;-webkit-text-stroke:0"></div>
<div class="t c" style="left:444.8px;top:348px;width:30px;height:14px;line-height:14px;background:#262626;border-radius:4px;font-size:11px;color:#f2f2f2;font-weight:bold;-webkit-text-stroke:0"></div>
<div class="t c" style="left:479.3px;top:348px;width:30px;height:14px;line-height:14px;background:#262626;border-radius:4px;font-size:11px;color:#f2f2f2;font-weight:bold;-webkit-text-stroke:0">0</div>
<div class="t" style="left:300px;top:366px;width:19px;text-align:right;font-size:10.5px;line-height:14px;color:#cfcfcf">5</div>
<div class="t c" style="left:330px;top:366px;width:30px;height:14px;line-height:14px;background:#1f1f1f;border-radius:4px;font-size:11px;color:#f2f2f2;font-weight:bold;-webkit-text-stroke:0">0</div>
<div class="t c" style="left:362.8px;top:366px;width:10px;font-size:9.5px;line-height:14px;color:#5e5e5e;">5</div>
<div class="t c" style="left:375.8px;top:366px;width:30px;height:14px;line-height:14px;background:#262626;border-radius:4px;font-size:11px;color:#f2f2f2;font-weight:bold;-webkit-text-stroke:0"></div>
<div class="t c" style="left:410.3px;top:366px;width:30px;height:14px;line-height:14px;background:#262626;border-radius:4px;font-size:11px;color:#f2f2f2;font-weight:bold;-webkit-text-stroke:0"></div>
<div class="t c" style="left:444.8px;top:366px;width:30px;height:14px;line-height:14px;background:#262626;border-radius:4px;font-size:11px;color:#f2f2f2;font-weight:bold;-webkit-text-stroke:0"></div>
<div class="t c" style="left:479.3px;top:366px;width:30px;height:14px;line-height:14px;background:#262626;border-radius:4px;font-size:11px;color:#f2f2f2;font-weight:bold;-webkit-text-stroke:0"></div>
<div class="t" style="left:300px;top:384px;width:19px;text-align:right;font-size:10.5px;line-height:14px;color:#cfcfcf">6</div>
<div class="t c" style="left:330px;top:384px;width:30px;height:14px;line-height:14px;background:#1f1f1f;border-radius:4px;font-size:11px;color:#f2f2f2;font-weight:bold;-webkit-text-stroke:0">0</div>
<div class="t c" style="left:362.8px;top:384px;width:10px;font-size:9.5px;line-height:14px;color:#5e5e5e;">6</div>
<div class="t c" style="left:375.8px;top:384px;width:30px;height:14px;line-height:14px;background:#262626;border-radius:4px;font-size:11px;color:#f2f2f2;font-weight:bold;-webkit-text-stroke:0"></div>
<div class="t c" style="left:410.3px;top:384px;width:30px;height:14px;line-height:14px;background:#262626;border-radius:4px;font-size:11px;color:#f2f2f2;font-weight:bold;-webkit-text-stroke:0"></div>
<div class="t c" style="left:444.8px;top:384px;width:30px;height:14px;line-height:14px;background:#262626;border-radius:4px;font-size:11px;color:#f2f2f2;font-weight:bold;-webkit-text-stroke:0"></div>
<div class="t c" style="left:479.3px;top:384px;width:30px;height:14px;line-height:14px;background:#262626;border-radius:4px;font-size:11px;color:#f2f2f2;font-weight:bold;-webkit-text-stroke:0"></div>
<div class="t" style="left:300px;top:402px;width:19px;text-align:right;font-size:10.5px;line-height:14px;color:#cfcfcf">7</div>
<div class="t c" style="left:330px;top:402px;width:30px;height:14px;line-height:14px;background:#1f1f1f;border-radius:4px;font-size:11px;color:#f2f2f2;font-weight:bold;-webkit-text-stroke:0">0</div>
<div class="t c" style="left:362.8px;top:402px;width:10px;font-size:9.5px;line-height:14px;color:#5e5e5e;">7</div>
<div class="t c" style="left:375.8px;top:402px;width:30px;height:14px;line-height:14px;background:#262626;border-radius:4px;font-size:11px;color:#f2f2f2;font-weight:bold;-webkit-text-stroke:0"></div>
<div class="t c" style="left:410.3px;top:402px;width:30px;height:14px;line-height:14px;background:#262626;border-radius:4px;font-size:11px;color:#f2f2f2;font-weight:bold;-webkit-text-stroke:0"></div>
<div class="t c" style="left:444.8px;top:402px;width:30px;height:14px;line-height:14px;background:#262626;border-radius:4px;font-size:11px;color:#f2f2f2;font-weight:bold;-webkit-text-stroke:0"></div>
<div class="t c" style="left:479.3px;top:402px;width:30px;height:14px;line-height:14px;background:#262626;border-radius:4px;font-size:11px;color:#f2f2f2;font-weight:bold;-webkit-text-stroke:0"></div>
<div class="a" style="left:250.3px;top:419.2px;width:500px;height:1.3px;background:#474747;"></div>
<div class="t c" style="left:266px;top:434.3px;width:105.7px;height:16.5px;line-height:16.5px;background:#5b5b5b;border-radius:4px;font-size:10.5px;color:#f0f0f0;">Reset to Defaults</div>
<div class="t" style="left:378px;top:434.3px;width:147px;height:16.7px;background:#5b5b5b;border-radius:4px"></div>
<div class="t" style="left:384px;top:435px;font-size:10.5px;line-height:13px;color:#f0f0f0;">Use levels from device...</div>
<svg class="a" style="left:514px;top:437px;" width="8" height="11" viewBox="0 0 8 11"><path d="M1 4 L4 1 L7 4 M1 7 L4 10 L7 7" fill="none" stroke="#f0f0f0" stroke-width="1.3"/></svg>
<div class="t c" style="left:667px;top:434.2px;width:68px;height:16.8px;line-height:16.8px;background:#5b5b5b;border-radius:4px;font-size:10.5px;color:#f0f0f0;">Done</div>
</body></html>
